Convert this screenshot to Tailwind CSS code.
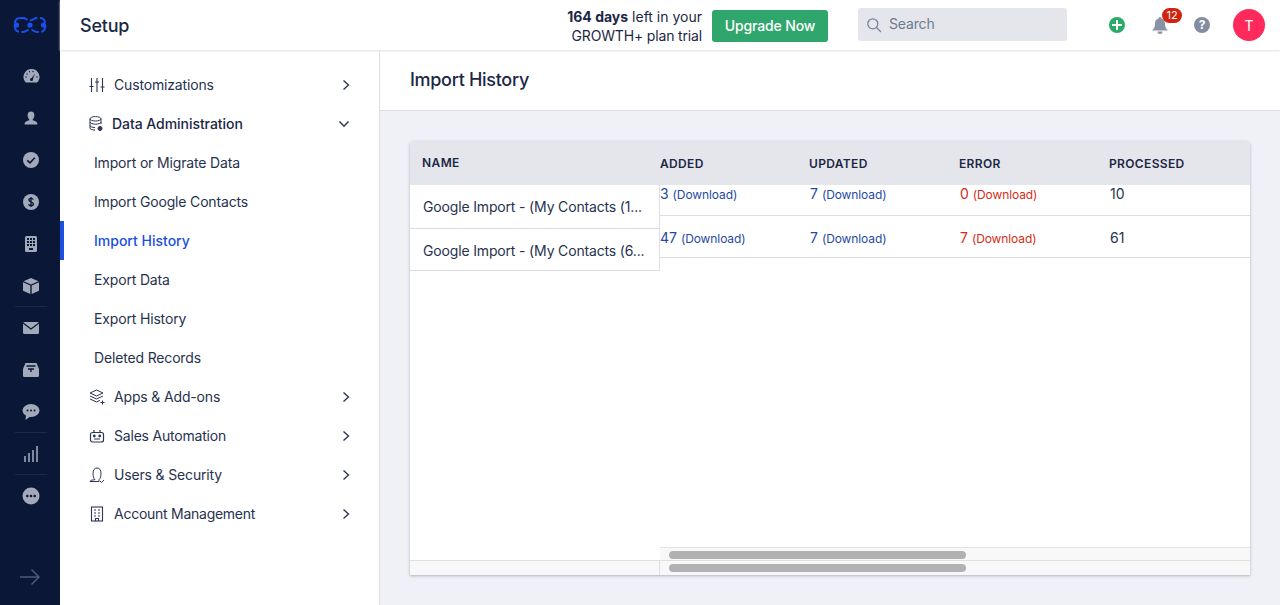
<!DOCTYPE html>
<html lang="en">
<head>
<meta charset="utf-8">
<title>Import History</title>
<script src="https://cdn.jsdelivr.net/npm/@tailwindcss/browser@4"></script>
</head>
<body class="font-['Inter','Liberation_Sans',sans-serif] text-[#1c2745] bg-[#f0f1f6] overflow-hidden">
<div class="flex h-[605px] w-[1280px] overflow-hidden">
  <!-- Rail -->
  <nav class="w-[60px] shrink-0 bg-[#0b1736] flex flex-col items-center relative">
    <div class="h-[50px] flex items-center justify-center">
      <svg width="34" height="18" viewBox="0 0 34 18" fill="none"><path d="M7 2H10C13.500 2 13.500 4.500 17 4.500S20.500 2 24 2H27C30.500 2 32.500 5 32.500 9S30.500 16 27 16H24C20.500 16 20.500 13.500 17 13.500S13.500 16 10 16H7C3.500 16 1.500 13 1.500 9S3.500 2 7 2Z" stroke="#1a50f0" stroke-width="1.900" stroke-dasharray="8 2.500"/><circle cx="3.500" cy="9" r="2.600" fill="#1a50f0"/><circle cx="17" cy="9" r="2.600" fill="#1a50f0"/><circle cx="30.500" cy="9" r="2.600" fill="#1a50f0"/></svg>
    </div>
    <div class="flex flex-col items-center pt-[5px] ml-[2px]">
      <a class="h-[42px] w-8 flex items-center justify-center"><svg width="17" height="16" viewBox="0 0 17 16"><path d="M8.500 1A8 8 0 0 0 1.900 13.500L3 14.500H14L15.100 13.500A8 8 0 0 0 8.500 1Z" fill="#a1a9ba"/><path d="M8 11L12 5.500L9.500 12Z" fill="#0b1736"/><circle cx="8.500" cy="11.500" r="1.500" fill="#0b1736"/><g fill="#0b1736"><circle cx="4" cy="6" r=".7"/><circle cx="6.500" cy="3.700" r=".7"/><circle cx="10" cy="3.500" r=".7"/><circle cx="3" cy="9" r=".7"/><circle cx="14" cy="9" r=".7"/></g></svg></a>
      <a class="h-[42px] w-8 flex items-center justify-center"><svg width="14" height="14" viewBox="0 0 14 14"><path d="M7 0.500C9.200 0.500 10.400 2.200 10.400 4.300C10.400 6 9.700 7.300 8.800 8.200V9.200C10.800 10 13.500 10.500 13.500 13.500H.5C.5 10.500 3.200 10 5.200 9.200V8.200C4.300 7.300 3.600 6 3.600 4.300C3.600 2.200 4.800 .5 7 .5Z" fill="#a1a9ba"/></svg></a>
      <a class="h-[42px] w-8 flex items-center justify-center"><svg width="16" height="16" viewBox="0 0 16 16"><circle cx="8" cy="8" r="8" fill="#a1a9ba"/><path d="M4.300 8.300L7 10.800L11.800 5.800" stroke="#0b1736" stroke-width="1.600" fill="none"/></svg></a>
      <a class="h-[42px] w-8 flex items-center justify-center"><svg width="16" height="16" viewBox="0 0 16 16"><circle cx="8" cy="8" r="8" fill="#a1a9ba"/><path d="M10.300 5.600C10 4.700 9.100 4.300 8 4.300C6.700 4.300 5.900 5 5.900 6C5.900 8.300 10.400 7.300 10.400 9.900C10.400 11 9.400 11.700 8 11.700C6.700 11.700 5.900 11.200 5.600 10.300M8 3V13" stroke="#0b1736" stroke-width="1.300" fill="none"/></svg></a>
      <a class="h-[42px] w-8 flex items-center justify-center"><svg width="12" height="16" viewBox="0 0 12 16"><rect width="12" height="16" rx="1.500" fill="#a1a9ba"/><g fill="#0b1736"><rect x="2" y="2" width="2" height="2"/><rect x="5" y="2" width="2" height="2"/><rect x="8" y="2" width="2" height="2"/><rect x="2" y="5" width="2" height="2"/><rect x="5" y="5" width="2" height="2"/><rect x="8" y="5" width="2" height="2"/><rect x="2" y="8" width="2" height="2"/><rect x="5" y="8" width="2" height="2"/><rect x="8" y="8" width="2" height="2"/><rect x="4" y="12" width="4" height="2"/></g></svg></a>
      <a class="h-[42px] w-8 flex items-center justify-center"><svg width="16" height="16" viewBox="0 0 16 16"><path d="M8 0L15.500 3.200L8 6.400L.5 3.200Z" fill="#a1a9ba"/><path d="M0 4.300L7.300 7.400V16L0 12.800ZM16 4.300L8.700 7.400V16L16 12.800Z" fill="#a1a9ba"/></svg></a>
      <div class="w-8 h-px bg-[#1e2a48] -mt-px"></div>
      <a class="h-[42px] w-8 flex items-center justify-center"><svg width="16" height="12" viewBox="0 0 16 12"><rect width="16" height="12" rx="1.500" fill="#a1a9ba"/><path d="M0 1L8 7L16 1" stroke="#0b1736" stroke-width="1.200" fill="none"/></svg></a>
      <a class="h-[42px] w-8 flex items-center justify-center"><svg width="16" height="14" viewBox="0 0 16 14"><path d="M2.500 0H13.500L16 6V12.500Q16 14 14.500 14H1.500Q0 14 0 12.500V6Z" fill="#a1a9ba"/><path d="M3.500 3H12.500M5 6H11M8 6V9" stroke="#0b1736" stroke-width="1.400"/></svg></a>
      <a class="h-[42px] w-8 flex items-center justify-center"><svg width="18" height="16" viewBox="0 0 18 16"><ellipse cx="9" cy="6.500" rx="8.500" ry="6.500" fill="#a1a9ba"/><path d="M4 11L3.500 16L9 12Z" fill="#a1a9ba"/><g fill="#0b1736"><circle cx="5.500" cy="6.500" r="1"/><circle cx="9" cy="6.500" r="1"/><circle cx="12.500" cy="6.500" r="1"/></g></svg></a>
      <div class="w-8 h-px bg-[#1e2a48] -mt-px"></div>
      <a class="h-[42px] w-8 flex items-center justify-center"><svg width="14" height="16" viewBox="0 0 14 16" fill="#7f889c"><rect x="0" y="10" width="2" height="6"/><rect x="4" y="7" width="2" height="9"/><rect x="8" y="4" width="2" height="12"/><rect x="12" y="0" width="2" height="16"/></svg></a>
      <div class="w-8 h-px bg-[#1e2a48] -mt-px"></div>
      <a class="h-[42px] w-8 flex items-center justify-center"><svg width="18" height="18" viewBox="0 0 18 18"><circle cx="9" cy="9" r="8.500" fill="#a1a9ba"/><g fill="#0b1736"><circle cx="5.300" cy="9" r="1.300"/><circle cx="9" cy="9" r="1.300"/><circle cx="12.700" cy="9" r="1.300"/></g></svg></a>
    </div>
    <svg class="absolute left-[20px] top-[568px]" width="20" height="18" viewBox="0 0 20 18" fill="none"><path d="M0 9H19M11.500 1.500L19 9L11.500 16.500" stroke="#4f5a75" stroke-width="1.500"/></svg>
  </nav>

  <div class="flex-1 flex flex-col min-w-0">
    <!-- Header -->
    <header class="h-[50px] shrink-0 bg-white flex items-center shadow-[0_1px_2px_#dfe1ea] relative z-10 pl-[20px]">
      <h1 class="text-[18px] font-medium leading-none w-[423px] mt-[2px] tracking-[-0.2px]">Setup</h1>
      <div class="text-[14px] leading-[19px] text-right w-[199px] mt-[1px]"><span class="font-bold">164 days</span> left in your<br><span class="tracking-[-0.16px]">GROWTH+ plan trial</span></div>
      <button class="ml-[10px] w-[116px] h-[32px] rounded-[3px] bg-[#2fa66b] text-white text-[14px] font-medium mt-[2px] pb-[2px] tracking-[-0.15px]">Upgrade Now</button>
      <div class="ml-[30px] w-[209px] h-[33px] rounded-[3px] bg-[#e5e6ec] flex items-center pl-[8px] gap-[7px] text-[14px] text-[#6f7a90] -mt-[1px] tracking-[-0.15px]">
        <svg width="16" height="16" viewBox="0 0 16 16" fill="none" stroke="#78829a" stroke-width="1.300"><circle cx="6.800" cy="6.800" r="5"/><path d="M10.500 10.500L15 15"/></svg>
        <span class="-mt-[2px]">Search</span>
      </div>
      <div class="ml-[42px] w-4 h-4 rounded-full bg-[#2bab68] flex items-center justify-center">
        <svg width="10" height="10" viewBox="0 0 10 10" stroke="#fff" stroke-width="2"><path d="M5 0V10M0 5H10"/></svg>
      </div>
      <div class="relative ml-[27px] w-4 h-4">
        <svg width="16" height="17" viewBox="0 0 16 17" fill="#8a93a6"><path d="M8 0C9 0 9.500 .7 9.500 1.500C12 2.300 13 4.200 13 7C13 10 14 11.500 16 13.500H0C2 11.500 3 10 3 7C3 4.200 4 2.300 6.500 1.500C6.500 .7 7 0 8 0Z"/><path d="M5.500 14.500H10.500A2.500 2.500 0 0 1 5.500 14.500Z"/></svg>
        <span class="absolute left-[10px] -top-[9px] w-[20px] h-[15px] rounded-full bg-[#d3210f] text-white text-[11px] leading-[15px] text-center">12</span>
      </div>
      <div class="ml-[26px] w-4 h-4 rounded-full bg-[#848da0] text-white text-[12px] font-bold leading-4 text-center">?</div>
      <div class="ml-[23px] w-8 h-8 rounded-full bg-[#ff2a5b] text-white text-[14px] flex items-center justify-center">T</div>
    </header>

    <div class="flex-1 flex min-h-0">
      <!-- Sidebar -->
      <aside class="w-[320px] shrink-0 bg-white border-r border-[#dcdee6] pt-[15px] text-[14px] text-[#27324f] tracking-[-0.16px]">
        <a class="h-[39px] flex items-center pl-[29px] pr-[29px]">
          <svg class="w-4 h-4 mr-[9px]" viewBox="0 0 16 16" fill="none" stroke="#2b3654" stroke-width="1.100"><path d="M2.500 1V15M8 1V15M13.500 1V15M.5 9.500H4.500M6 5H10M11.500 10H15.500"/></svg>
          <span class="flex-1">Customizations</span>
          <svg width="8" height="12" viewBox="0 0 8 12" fill="none" stroke="#2b3654" stroke-width="1.400"><path d="M1.500 1.500L6.500 6L1.500 10.500"/></svg>
        </a>
        <a class="h-[39px] flex items-center pl-[29px] pr-[29px] font-medium text-[#1c2745] tracking-[-0.05px]">
          <svg class="w-[14px] h-4 mr-[9px]" viewBox="0 0 14 16" fill="none" stroke="#2b3654" stroke-width="1"><ellipse cx="6.500" cy="2.800" rx="5.500" ry="2.200"/><path d="M1 2.800V12C1 13.300 3 14 6 14M12 2.800V8M1 6C1 7.200 3.500 8.200 6.500 8.200S12 7.200 12 6M1 9.500C1 10.700 3 11.500 6 11.500"/><circle cx="11" cy="12.500" r="2" fill="#2b3654"/></svg>
          <span class="flex-1">Data Administration</span>
          <svg width="12" height="8" viewBox="0 0 12 8" fill="none" stroke="#2b3654" stroke-width="1.400"><path d="M1.500 1.500L6 6.200L10.500 1.500"/></svg>
        </a>
        <a class="h-[39px] flex items-center pl-[34px]">Import or Migrate Data</a>
        <a class="h-[39px] flex items-center pl-[34px]">Import Google Contacts</a>
        <a class="h-[39px] flex items-center pl-[30px] border-l-4 border-[#1a4fe0] text-[#1a4fe0] font-medium tracking-[0px]">Import History</a>
        <a class="h-[39px] flex items-center pl-[34px]">Export Data</a>
        <a class="h-[39px] flex items-center pl-[34px]">Export History</a>
        <a class="h-[39px] flex items-center pl-[34px]">Deleted Records</a>
        <a class="h-[39px] flex items-center pl-[29px] pr-[29px]">
          <svg class="w-4 h-4 mr-[9px]" viewBox="0 0 16 16" fill="none" stroke="#2b3654" stroke-width="1"><path d="M7.500 1L14 4L7.500 7L1 4ZM1 7L7.500 10L14 7M1 10L7.500 13L11 11.400"/><path d="M13.500 11.500V15.500M11.500 13.500H15.500"/></svg>
          <span class="flex-1">Apps &amp; Add-ons</span>
          <svg width="8" height="12" viewBox="0 0 8 12" fill="none" stroke="#2b3654" stroke-width="1.400"><path d="M1.500 1.500L6.500 6L1.500 10.500"/></svg>
        </a>
        <a class="h-[39px] flex items-center pl-[29px] pr-[29px]">
          <svg class="w-4 h-4 mr-[9px]" viewBox="0 0 16 16" fill="none" stroke="#2b3654" stroke-width="1.200"><rect x="1.500" y="4.500" width="13" height="9.500" rx="2"/><path d="M5 4.500V2M11 4.500V2M5 11H11"/><circle cx="5.300" cy="8" r=".8" fill="#2b3654"/><circle cx="10.700" cy="8" r=".8" fill="#2b3654"/></svg>
          <span class="flex-1 tracking-[-0.2px]">Sales Automation</span>
          <svg width="8" height="12" viewBox="0 0 8 12" fill="none" stroke="#2b3654" stroke-width="1.400"><path d="M1.500 1.500L6.500 6L1.500 10.500"/></svg>
        </a>
        <a class="h-[39px] flex items-center pl-[29px] pr-[29px]">
          <svg class="w-4 h-4 mr-[9px]" viewBox="0 0 16 16" fill="none" stroke="#2b3654" stroke-width="1"><path d="M1 14.500H10V12.700C11.500 11.500 12 9 12 6.500C12 3 10.500 1 8 1S4 3 4 6.500C4 9 4.500 11.500 6 12.700C4 13 1.500 12.800 1 14.500ZM11 14L12.500 15.500L15 13"/></svg>
          <span class="flex-1">Users &amp; Security</span>
          <svg width="8" height="12" viewBox="0 0 8 12" fill="none" stroke="#2b3654" stroke-width="1.400"><path d="M1.500 1.500L6.500 6L1.500 10.500"/></svg>
        </a>
        <a class="h-[39px] flex items-center pl-[29px] pr-[29px]">
          <svg class="w-4 h-4 mr-[9px]" viewBox="0 0 16 16" fill="none" stroke="#2b3654" stroke-width="1.100"><rect x="2.500" y="1" width="11" height="14"/><path d="M5 4H7M9 4H11M5 7H7M9 7H11M5 10H7M9 10H11M6.500 15V12.500H9.500V15"/></svg>
          <span class="flex-1 tracking-[-0.26px]">Account Management</span>
          <svg width="8" height="12" viewBox="0 0 8 12" fill="none" stroke="#2b3654" stroke-width="1.400"><path d="M1.500 1.500L6.500 6L1.500 10.500"/></svg>
        </a>
      </aside>

      <!-- Main -->
      <main class="flex-1 min-w-0 flex flex-col">
        <div class="h-[61px] shrink-0 bg-white border-b border-[#dcdee6] flex items-center pl-[30px] pb-[2px]">
          <h2 class="text-[18px] font-medium tracking-[-0.3px]">Import History</h2>
        </div>
        <div class="flex-1 min-h-0 px-[30px] pt-[30px] pb-[30px]">
          <div class="h-[434px] w-[840px] bg-white rounded-t-[4px] shadow-[0_1px_3px_rgba(90,100,130,0.45)] flex overflow-hidden">
            <!-- Frozen column -->
            <div class="w-[250px] shrink-0 flex flex-col">
              <div class="h-[44px] shrink-0 bg-[#e5e6ec] flex items-center pl-[12px] pb-[1px] text-[12px] font-semibold tracking-[0.4px]">NAME</div>
              <div class="h-[44px] shrink-0 border-b border-r border-[#dcdde5] flex items-center pl-[13px] text-[14px] text-[#27324f] tracking-[-0.16px]">Google Import - (My Contacts (1...</div>
              <div class="h-[42px] shrink-0 border-b border-r border-[#dcdde5] flex items-center pl-[13px] pt-[2px] text-[14px] text-[#27324f] tracking-[-0.16px]">Google Import - (My Contacts (6...</div>
              <div class="flex-1"></div>
              <div class="h-[15px] shrink-0 bg-[#f8f8f8] border-t border-r border-[#dfdfdf]"></div>
            </div>
            <!-- Scrolling columns -->
            <div class="flex-1 min-w-0 flex flex-col">
              <div class="h-[44px] shrink-0 bg-[#e5e6ec] grid grid-cols-[149px_150px_150px_1fr] items-center pt-[2px] text-[12px] font-semibold tracking-[0.35px]">
                <span>ADDED</span><span>UPDATED</span><span>ERROR</span><span>PROCESSED</span>
              </div>
              <div class="h-[31px] shrink-0 border-b border-[#dcdde5] grid grid-cols-[150px_150px_150px_1fr] items-start pb-[12px] leading-[18px] text-[14px]">
                <span class="text-[#1f4aa5]">3 <span class="text-[12px] tracking-[-0.1px]">(Download)</span></span>
                <span class="text-[#1f4aa5]">7 <span class="text-[12px] tracking-[-0.1px]">(Download)</span></span>
                <span class="text-[#d72d18]">0 <span class="text-[12px] tracking-[-0.1px]">(Download)</span></span>
                <span class="text-[#27324f]">10</span>
              </div>
              <div class="h-[42px] shrink-0 border-b border-[#dcdde5] grid grid-cols-[150px_150px_150px_1fr] items-center pt-[2px] text-[14px]">
                <span class="text-[#1f4aa5]">47 <span class="text-[12px] tracking-[-0.1px]">(Download)</span></span>
                <span class="text-[#1f4aa5]">7 <span class="text-[12px] tracking-[-0.1px]">(Download)</span></span>
                <span class="text-[#d72d18]">7 <span class="text-[12px] tracking-[-0.1px]">(Download)</span></span>
                <span class="text-[#27324f]">61</span>
              </div>
              <div class="flex-1"></div>
              <div class="h-[13px] shrink-0 bg-[#f8f8f8] border-t border-[#e2e2e2] pl-[9px] pt-[3px]"><div class="w-[297px] h-[8px] rounded-[4px] bg-[#b1b1b1]"></div></div>
              <div class="h-[15px] shrink-0 bg-[#f8f8f8] border-t border-[#dfdfdf] pl-[9px] pt-[3px]"><div class="w-[297px] h-[8px] rounded-[4px] bg-[#b1b1b1]"></div></div>
            </div>
          </div>
        </div>
      </main>
    </div>
  </div>
</div>
</body>
</html>
